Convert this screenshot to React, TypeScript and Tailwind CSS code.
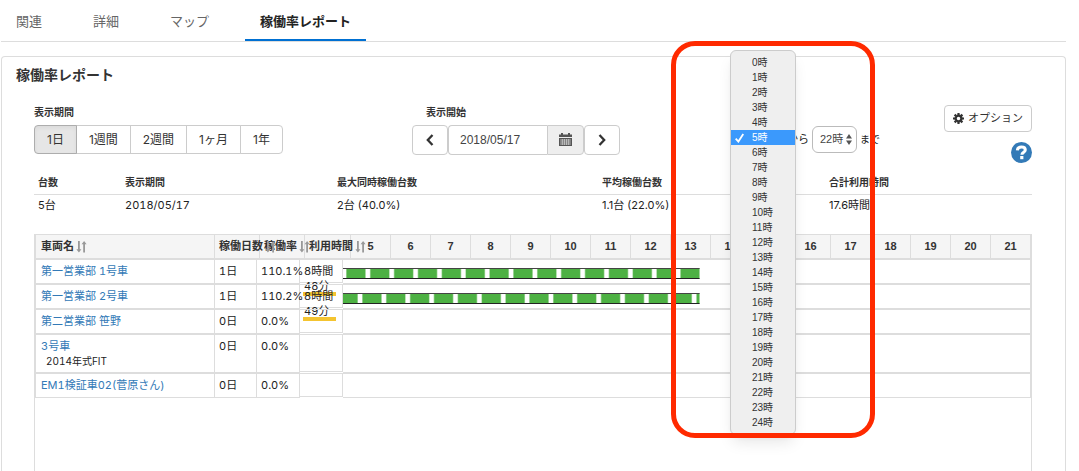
import React, { useState } from 'react';

interface Vehicle {
  name: string;
  note?: string;
  days: string;
  rate: string;
  time?: [string, string];
  firstGap?: number;
}

const tabs = ['関連', '詳細', 'マップ', '稼働率レポート'];
const periods = ['1日', '1週間', '2週間', '1ヶ月', '1年'];
const hours = Array.from({ length: 25 }, (_, i) => i);
const chartHours = hours.slice(5, 22);

const summary = [
  { label: '台数', value: '5台', width: 'w-[87px]' },
  { label: '表示期間', value: '2018/05/17', width: 'w-[212px] tabular-nums' },
  { label: '最大同時稼働台数', value: '2台 (40.0%)', width: 'w-[265px]' },
  { label: '平均稼働台数', value: '1.1台 (22.0%)', width: 'w-[227px]' },
  { label: '合計利用時間', value: '17.6時間', width: '' },
];

const vehicles: Vehicle[] = [
  { name: '第一営業部 1号車', days: '1日', rate: '110.1%', time: ['8時間', '48分'], firstGap: -1 },
  { name: '第一営業部 2号車', days: '1日', rate: '110.2%', time: ['8時間', '49分'], firstGap: 15 },
  { name: '第二営業部 笹野', days: '0日', rate: '0.0%' },
  { name: '3号車', note: '2014年式FIT', days: '0日', rate: '0.0%' },
  { name: 'EM1検証車02(菅原さん)', days: '0日', rate: '0.0%' },
];

const SortIcon = () => (
  <svg className="relative ml-0.5 shrink-0" width="11" height="12" viewBox="0 0 11 12">
    <path fill="#999" d="M2 0h1.8v8.3h1.6L2.9 11.5.4 8.3H2zM7.2 11.5H9V3.2h1.6L8.1 0 5.6 3.2h1.6z" />
  </svg>
);

const CalendarIcon = () => (
  <svg width="13" height="14" viewBox="0 0 13 14">
    <path fill="#555" d="M0 1.5h2V0h2v1.5h5V0h2v1.5h2V4H0zM0 5h13v8H0z" />
    <path stroke="#eee" strokeWidth="0.6" d="M1 7h11M1 9h11M1 11h11M3.3 6v6M5.4 6v6M7.6 6v6M9.7 6v6" />
  </svg>
);

const CogIcon = () => (
  <svg width="11" height="11" viewBox="0 0 22 22" fill="none" stroke="#333">
    <circle cx="11" cy="11" r="5.8" strokeWidth="4.6" />
    <path strokeWidth="4.4" d="M11 0v4M11 18v4M0 11h4M18 11h4M3.2 3.2L6 6M16 16l2.8 2.8M3.2 18.8L6 16M16 6l2.8-2.8" />
  </svg>
);

const HelpIcon = () => (
  <svg width="21" height="21" viewBox="0 0 21 21">
    <circle cx="10.5" cy="10.5" r="10.5" fill="#337ab7" />
    <path fill="none" stroke="#fff" strokeWidth="3" d="M6.3 8.4C6.5 5.9 8.2 5 10.4 5c2.4 0 3.9 1.1 3.9 2.9 0 2.4-3.4 2.2-3.4 4.9" />
    <path fill="#fff" d="M9.2 14h3.2v3.2H9.2z" />
  </svg>
);

const Chevron = ({ d }: { d: string }) => (
  <svg width="8" height="12" viewBox="0 0 8 12" fill="none" stroke="#333" strokeWidth="2.3">
    <path d={d} />
  </svg>
);

// Alternating used / idle blocks over the first part of the day
const UsageBar = ({ firstGap }: { firstGap: number }) => {
  const total = 356;
  const gaps = [];
  for (let x = firstGap; x < total; x += 23.83) gaps.push(x);
  return (
    <svg
      className="mt-2 block h-[11px]"
      style={{ width: `${(total / 686) * 100}%` }}
      viewBox={`0 0 ${total} 11`}
      preserveAspectRatio="none"
    >
      <rect width={total} height="11" fill="#4db143" />
      {gaps.map((x) => (
        <g key={x}>
          <rect x={x - 0.7} y="1" width="5.4" height="9" fill="#a9dba3" />
          <rect x={x} y="1" width="4" height="9" fill="#fff" />
        </g>
      ))}
      <rect width={total} height="1" fill="#444" />
      <rect y="10" width={total} height="1" fill="#222" />
    </svg>
  );
};

interface HourSelectProps {
  label: string;
  value: number;
  onChange: (value: number) => void;
}

const HourSelect: React.FC<HourSelectProps> = ({ label, value, onChange }) => (
  <div className="relative">
    <select
      aria-label={label}
      value={value}
      onChange={(e) => onChange(Number(e.target.value))}
      className="block h-[27px] w-[45px] appearance-none rounded-md border border-[#bbb] bg-white pl-[7px] text-[11px] text-[#444]"
    >
      {hours.map((h) => (
        <option key={h} value={h}>{`${h}時`}</option>
      ))}
    </select>
    <svg className="pointer-events-none absolute top-2 right-[5px]" width="6" height="11" viewBox="0 0 6 11" fill="#555">
      <path d="M0 4.5L3 0l3 4.5zM0 6.5h6L3 11z" />
    </svg>
  </div>
);

export default function App() {
  const [period, setPeriod] = useState('1日');
  const [from, setFrom] = useState(5);
  const [to, setTo] = useState(22);

  return (
    <div className="flex min-h-screen flex-col overflow-x-hidden bg-white pr-[13px] pl-px font-['Inter','Noto_Sans_CJK_JP',sans-serif] text-[11px] text-[#222]">
      <nav className="flex h-[42px] gap-[21px] border-b border-[#ddd] text-[13px] text-[#666]">
        {tabs.map((tab) => (
          <a
            key={tab}
            href="#"
            className={
              tab === '稼働率レポート'
                ? 'flex h-[41px] items-center border-b-2 border-[#0070d2] px-[15px] pt-1 font-bold text-[#222]'
                : 'flex h-[41px] items-center border-b-2 border-transparent px-[15px] pt-1'
            }
          >
            {tab}
          </a>
        ))}
      </nav>

      <main className="mt-3.5 flex flex-1 flex-col rounded-t border border-b-0 border-[#ddd] pt-2">
        <h1 className="pl-3.5 text-sm leading-5 font-bold text-[#333]">稼働率レポート</h1>

        <div className="mt-5 flex flex-1 flex-col pr-[33px] pl-8">
          <div className="flex items-start">
            <div className="w-[378px]">
              <div className="mb-1.5 text-[10px] leading-3.5 font-bold text-[#333]">表示期間</div>
              <div className="flex text-xs text-[#333]">
                {periods.map((p) => (
                  <button
                    key={p}
                    type="button"
                    onClick={() => setPeriod(p)}
                    className={
                      p === period
                        ? 'relative h-[29px] border border-[#adadad] bg-[#e6e6e6] px-3 inset-shadow-sm first:rounded-l last:rounded-r'
                        : '-ml-px h-[29px] border border-[#ccc] bg-white px-3 first:rounded-l last:rounded-r'
                    }
                  >
                    {p}
                  </button>
                ))}
              </div>
            </div>

            <div>
              <label htmlFor="start" className="mb-1.5 block pl-3.5 text-[10px] leading-3.5 font-bold text-[#333]">表示開始</label>
              <div className="flex h-[30px]">
                <button type="button" aria-label="前へ" className="flex w-9 items-center justify-center rounded border border-[#ccc]">
                  <Chevron d="M6.5 1L1.8 6l4.7 5" />
                </button>
                <input
                  id="start"
                  defaultValue="2018/05/17"
                  className="w-[99px] rounded-l border border-r-0 border-[#ccc] pl-[11px] font-['Liberation_Sans',sans-serif] text-xs text-[#444]"
                />
                <button type="button" aria-label="カレンダー" className="flex w-[37px] items-center justify-center rounded-r border border-[#ccc] bg-[#eee]">
                  <CalendarIcon />
                </button>
                <button type="button" aria-label="次へ" className="flex w-9 items-center justify-center rounded border border-[#ccc]">
                  <Chevron d="M1.5 1l4.7 5-4.7 5" />
                </button>
              </div>
            </div>

            <div className="mt-[21px] ml-[119px] flex items-center font-['Liberation_Sans','Noto_Sans_CJK_JP',sans-serif]">
              <div className="relative">
                <HourSelect label="開始時刻" value={from} onChange={setFrom} />
                <ul
                  role="listbox"
                  aria-label="開始時刻の候補"
                  className="absolute -top-[76px] -left-[9px] z-10 w-[66px] rounded-md border border-[#ccc] bg-[#efefef] py-1 text-[10px] leading-[15px] text-[#333] shadow-lg"
                >
                  {hours.map((h) => (
                    <li
                      key={h}
                      role="option"
                      aria-selected={h === from}
                      onClick={() => setFrom(h)}
                      className={h === from ? 'flex h-[15px] items-center bg-[#3b99fc] text-white' : 'flex h-[15px] items-center'}
                    >
                      <span className="flex w-[21px] justify-center pr-1">
                        {h === from && (
                          <svg width="9" height="10" viewBox="0 0 9 10" fill="none" stroke="#fff" strokeWidth="1.8">
                            <path d="M0.7 5.6L3.4 8.6 8.3 1" />
                          </svg>
                        )}
                      </span>
                      {`${h}時`}
                    </li>
                  ))}
                </ul>
                <div className="pointer-events-none absolute -top-[85px] -left-[68px] z-20 h-[397px] w-[204px] rounded-3xl border-[5px] border-[#ff2a00]" />
              </div>
              <span className="mx-[3px]">から</span>
              <HourSelect label="終了時刻" value={to} onChange={setTo} />
              <span className="ml-[3px] text-[10px]">まで</span>
            </div>

            <div className="ml-auto flex flex-col items-end">
              <button type="button" className="flex h-[27px] items-center gap-1 rounded-sm border border-[#ccc] px-2 text-[11px] text-[#333]">
                <CogIcon />
                オプション
              </button>
              <a href="#" aria-label="ヘルプ" className="mt-2.5">
                <HelpIcon />
              </a>
            </div>
          </div>

          <table className="mt-2 w-full table-fixed text-left">
            <thead>
              <tr className="h-[23px] border-b border-[#ddd] text-[10px] text-[#333]">
                {summary.map((s) => (
                  <th key={s.label} className={`pl-1 font-bold ${s.width}`}>{s.label}</th>
                ))}
              </tr>
            </thead>
            <tbody>
              <tr className="h-[22px]">
                {summary.map((s) => (
                  <td key={s.label} className={`pl-1 ${s.width}`}>{s.value}</td>
                ))}
              </tr>
            </tbody>
          </table>

          <div className="mt-[18px] flex-1 border border-b-0 border-[#ddd]">
            <table className="block text-left leading-[15px] whitespace-nowrap tabular-nums">
              <thead className="block">
                <tr className="grid h-[25px] grid-cols-[180px_45px_45px_46px_repeat(17,minmax(0,1fr))] border-b-2 border-[#ddd] bg-[#f5f5f5] text-[#333]">
                  <th className="flex items-center border-x border-[#ddd] pl-[5px]">車両名<SortIcon /></th>
                  <th className="flex items-center border-r border-[#ddd] pl-1">稼働日数<SortIcon /></th>
                  <th className="flex items-center border-r border-[#ddd] pl-1">稼働率<SortIcon /></th>
                  <th className="flex items-center border-r border-[#ddd] pl-1">利用時間<SortIcon /></th>
                  {chartHours.map((h) => (
                    <th key={h} className="flex items-center justify-center border-r border-[#ddd] font-['Liberation_Sans',sans-serif] text-[11px]">{h}</th>
                  ))}
                </tr>
              </thead>
              <tbody className="block">
                {vehicles.map((v) => (
                  <tr
                    key={v.name}
                    className={
                      v.note
                        ? 'group grid h-[39px] grid-cols-[180px_42px_43px_43px_minmax(0,1fr)] grid-rows-1'
                        : 'group grid h-[25px] grid-cols-[180px_42px_43px_43px_minmax(0,1fr)] grid-rows-1 last:h-6'
                    }
                  >
                    <td className="border-x border-b-2 border-[#ddd] pt-1 pl-[5px] group-last:border-b">
                      <a href="#" className="text-[#337ab7]">{v.name}</a>
                      {v.note && <div className="pl-[5px] text-[10px]">{v.note}</div>}
                    </td>
                    <td className="border-r border-b-2 border-[#ddd] pt-1 pl-1 group-last:border-b">{v.days}</td>
                    <td className="border-r border-b-2 border-[#ddd] pt-1 pl-1 group-last:border-b">{v.rate}</td>
                    <td className="-mt-px mb-0.5 border-y border-r border-[#ddd] pt-1 pl-[3px] group-last:mb-px">
                      {v.time && (
                        <>
                          <div className="pl-px">{v.time[0]}<br />{v.time[1]}</div>
                          <div className="-mt-0.5 h-1 w-[33px] bg-[#f4c430]" />
                        </>
                      )}
                    </td>
                    <td className="border-r border-b-2 border-[#ddd] group-last:border-b">
                      {v.firstGap !== undefined && <UsageBar firstGap={v.firstGap} />}
                    </td>
                  </tr>
                ))}
              </tbody>
            </table>
          </div>
        </div>
      </main>
    </div>
  );
}
